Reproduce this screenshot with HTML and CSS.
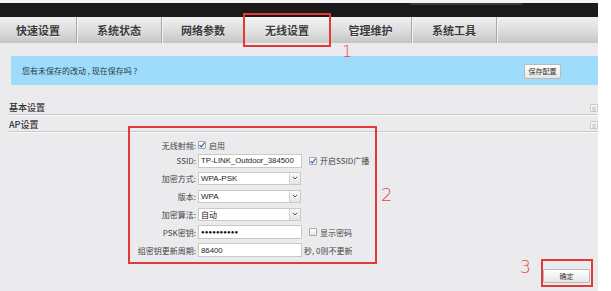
FILE: index.html
```html
<!DOCTYPE html>
<html>
<head>
<meta charset="utf-8">
<link rel="stylesheet" href="styles.css">
</head>
<body>
<div class="page">
  <div class="topstrip"></div>
  <div class="darkbar"><span class="darkseg"></span></div>
  <div class="tabs">
    <div class="tab w77">快速设置</div>
    <div class="tab w85">系统状态</div>
    <div class="tab w83">网络参数</div>
    <div class="tab w85 active">无线设置</div>
    <div class="tab w82">管理维护</div>
    <div class="tab w85">系统工具</div>
    <div class="tab-rest"></div>
  </div>
  <div class="content">
    <div class="notice">
      <span class="notice-text">您有未保存的改动 , 现在保存吗 ?</span>
      <span class="btn save">保存配置</span>
    </div>
    <div class="section first"><span>基本设置</span><span class="sec-icon">⊗</span></div>
    <div class="section"><span>AP设置</span><span class="sec-icon">⊗</span></div>
    <div class="form">
      <div class="row r1">
        <span class="label">无线射频:</span>
        <div class="ctrl"><span class="cb on"><svg viewBox="0 0 8 8" width="8" height="8"><path d="M1.6 4.2 L3.3 5.9 L6.6 1.6" fill="none" stroke="#2a5db8" stroke-width="1.1"/></svg></span><span class="txt">启用</span></div>
      </div>
      <div class="row r2">
        <span class="label">SSID:</span>
        <div class="ctrl"><span class="input">TP-LINK_Outdoor_384500</span><span class="cb on ml"><svg viewBox="0 0 8 8" width="8" height="8"><path d="M1.6 4.2 L3.3 5.9 L6.6 1.6" fill="none" stroke="#2a5db8" stroke-width="1.1"/></svg></span><span class="txt">开启SSID广播</span></div>
      </div>
      <div class="row">
        <span class="label">加密方式:</span>
        <div class="ctrl"><span class="select"><span class="sv">WPA-PSK</span><span class="arrow"><svg viewBox="0 0 6 4" width="6" height="4"><path d="M0.8 0.8 L3 3 L5.2 0.8" fill="none" stroke="#555" stroke-width="1"/></svg></span></span></div>
      </div>
      <div class="row">
        <span class="label">版本:</span>
        <div class="ctrl"><span class="select"><span class="sv">WPA</span><span class="arrow"><svg viewBox="0 0 6 4" width="6" height="4"><path d="M0.8 0.8 L3 3 L5.2 0.8" fill="none" stroke="#555" stroke-width="1"/></svg></span></span></div>
      </div>
      <div class="row">
        <span class="label">加密算法:</span>
        <div class="ctrl"><span class="select"><span class="sv">自动</span><span class="arrow"><svg viewBox="0 0 6 4" width="6" height="4"><path d="M0.8 0.8 L3 3 L5.2 0.8" fill="none" stroke="#555" stroke-width="1"/></svg></span></span></div>
      </div>
      <div class="row">
        <span class="label">PSK密钥:</span>
        <div class="ctrl"><span class="input pw">●●●●●●●●●●</span><span class="cb ml"></span><span class="txt">显示密码</span></div>
      </div>
      <div class="row">
        <span class="label">组密钥更新周期:</span>
        <div class="ctrl"><span class="input">86400</span><span class="txt sec">秒, 0则不更新</span></div>
      </div>
    </div>
    <div class="actions"><span class="btn ok">确定</span></div>
  </div>

  <div class="mark box1"></div>
  <div class="num n1">1</div>
  <div class="mark box2"></div>
  <div class="num n2">2</div>
  <div class="mark box3"></div>
  <div class="num n3">3</div>
</div>
</body>
</html>
```
FILE: styles.css
```css
html, body { margin: 0; padding: 0; background: #ffffff; }
.page {
  width: 598px;
  height: 291px;
  background: #ebebee;
  position: relative;
  overflow: hidden;
  font-family: "Noto Sans CJK SC", "Liberation Sans", sans-serif;
  color: #333;
}
.topstrip { height: 3px; background: #f3f3f3; }
.darkbar { height: 14px; background: #1a1a1a; display: flex; }
.darkseg { margin-left: 410px; width: 112px; height: 2px; background: #3a3a3a; }
.tabs {
  display: flex;
  height: 26px;
  background: linear-gradient(#f0f0f0, #dcdcdc 55%, #c4c4c4);
}
.tab {
  display: flex;
  align-items: center;
  justify-content: center;
  font-size: 11px;
  font-weight: bold;
  color: #3c3c3c;
  border-right: 1px solid #a9a9a9;
  box-shadow: 1px 0 0 #f4f4f4;
  box-sizing: border-box;
  text-shadow: 0 1px 0 rgba(255,255,255,0.6);
}
.tab.active { background: linear-gradient(#f4f4f4, #e2e2e2 55%, #cbcbcb); }
.w77 { width: 77px; }
.w85 { width: 85px; }
.w83 { width: 83px; }
.w82 { width: 82px; }
.tab-rest { flex: 1; }

.content { padding: 13px 0 0 9px; }
.notice {
  margin-left: 2px;
  height: 29px;
  background: #9fdcfb;
  display: flex;
  align-items: center;
  justify-content: space-between;
  padding: 0 37px 0 11px;
}
.notice-text { font-size: 8px; color: #2b3a44; white-space: nowrap; }
.btn {
  display: flex;
  align-items: center;
  justify-content: center;
  box-sizing: border-box;
  font-size: 7px;
  color: #333;
  border: 1px solid #b9b9b9;
  border-radius: 2px;
  background: linear-gradient(#ffffff, #e6e6e6);
  white-space: nowrap;
}
.save { width: 37px; height: 15px; margin-top: 1px; }

.section {
  display: flex;
  align-items: center;
  height: 17px;
  box-sizing: border-box;
  padding-top: 3px;
  border-bottom: 1px solid #c9c9cc;
  box-shadow: 0 1px 0 #f8f8f8;
  font-size: 9px;
  font-weight: 500;
  color: #333;
  margin-right: -3px;
}
.section.first { margin-top: 13px; }
.sec-icon {
  margin-left: auto;
  width: 8px;
  height: 8px;
  box-sizing: border-box;
  border: 1px solid #c8c8c8;
  background: #fafafa;
  border-radius: 1px;
  font-size: 5px;
  line-height: 6px;
  text-align: center;
  color: #999;
  font-weight: normal;
  transform: translateX(-3px);
}

.form { padding-top: 6px; }
.row {
  display: grid;
  grid-template-columns: 189px 1fr;
  align-items: center;
  height: 18px;
}
.row.r1 { height: 14px; }
.row.r2 { height: 17px; }
.label {
  text-align: right;
  padding-right: 2px;
  font-size: 8px;
  color: #444;
  white-space: nowrap;
}
.ctrl { display: flex; align-items: center; white-space: nowrap; }
.cb {
  width: 8px;
  height: 8px;
  flex: none;
  box-sizing: border-box;
  border: 1px solid #a8a8a8;
  background: linear-gradient(#ffffff, #e8e8e8);
  display: flex;
  align-items: center;
  justify-content: center;
  border-radius: 1px;
}
.cb svg { display: block; margin: -1px; }
.cb.ml { margin-left: 7px; }
.txt { font-size: 8px; color: #444; margin-left: 3px; }
.txt.sec { margin-left: 2px; }
.input {
  width: 104px;
  height: 14px;
  flex: none;
  box-sizing: border-box;
  border: 1px solid #c9c9c9;
  background: #fff;
  font-family: "Liberation Sans", sans-serif;
  font-size: 7.8px;
  color: #222;
  display: flex;
  align-items: center;
  padding-left: 2px;
  white-space: nowrap;
  overflow: hidden;
}
.input.pw { font-size: 6px; letter-spacing: 0.1px; color: #111; }
.select {
  width: 103px;
  height: 13px;
  flex: none;
  box-sizing: border-box;
  border: 1px solid #c9c9c9;
  background: #fff;
  display: flex;
  align-items: center;
}
.sv {
  flex: 1;
  padding-left: 2px;
  font-family: "Liberation Sans", "Noto Sans CJK SC", sans-serif;
  font-size: 8px;
  color: #222;
}
.arrow {
  width: 10px;
  height: 100%;
  border-left: 1px solid #d4d4d4;
  background: linear-gradient(#fafafa, #e4e4e4);
  display: flex;
  align-items: center;
  justify-content: center;
}
.arrow svg { display: block; }

.actions {
  display: flex;
  justify-content: flex-end;
  margin-top: 10px;
  padding-right: 8px;
}
.ok { width: 47px; height: 14px; }

.mark {
  position: absolute;
  box-sizing: border-box;
  border: 2px solid #e4393b;
}
.box1 { left: 243px; top: 13px; width: 88px; height: 34px; }
.box2 { left: 128px; top: 126px; width: 249px; height: 138px; }
.box3 { left: 541px; top: 259px; width: 52px; height: 28px; }
.num {
  position: absolute;
  font-family: "DejaVu Sans", sans-serif;
  font-weight: 200;
  color: #e5474b;
  line-height: 1;
}
.n1 { left: 342px; top: 44px; font-size: 16px; }
.n2 { left: 381px; top: 186px; font-size: 18px; }
.n3 { left: 520px; top: 259px; font-size: 17px; }
```
